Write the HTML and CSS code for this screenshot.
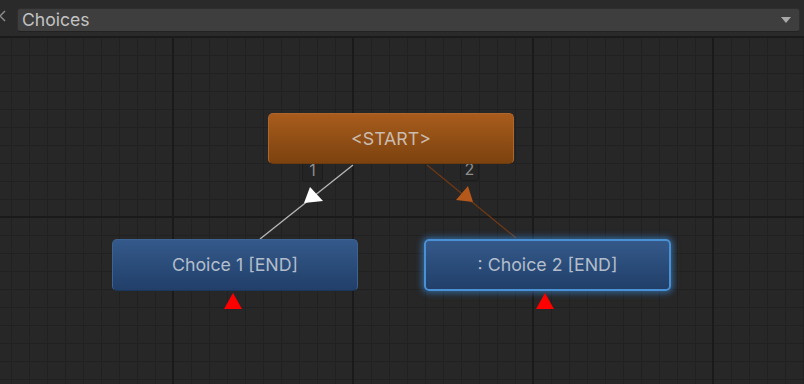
FILE: index.html
```html
<!DOCTYPE html>
<html lang="en">
<head>
	<meta charset="UTF-8">
	<title>Choices</title>
	<link rel="stylesheet" href="styles.css">
</head>
<body>
	<div class="toolbar">
		<svg class="back" width="12" height="37" viewBox="0 0 12 37">
			<polyline points="5,11 0,16 5,21" fill="none" stroke="#8a8a8a" stroke-width="1.5"/>
		</svg>
		<div class="dropdown">
			<span class="dropdown_text">Choices</span>
			<svg class="dropdown_arrow" width="10" height="6" viewBox="0 0 10 6">
				<polygon points="0,0 10,0 5,6" fill="#a9a9a9"/>
			</svg>
		</div>
	</div>

	<div class="graph">
		<svg class="edges" width="804" height="347" viewBox="0 0 804 347">
			<line x1="353" y1="128" x2="260" y2="202" stroke="#b5b5b5" stroke-width="1.4"/>
			<polygon points="310,150 323,164 304,166" fill="#ffffff"/>
			<line x1="427" y1="128" x2="516" y2="201" stroke="#6b3816" stroke-width="1.4"/>
			<polygon points="468,149 456,163 473,165" fill="#b4581c"/>
		</svg>

		<div class="label label_1">1</div>
		<div class="label label_2">2</div>

		<div class="node node_start">&lt;START&gt;</div>
		<div class="node node_end node_choice1">Choice 1 [END]</div>
		<div class="node node_end node_choice2 selected">: Choice 2 [END]</div>

		<div class="marker marker_1"></div>
		<div class="marker marker_2"></div>
	</div>
</body>
</html>
```

FILE: styles.css
```css
*{margin: 0; padding: 0;}
body{
	background: #282828;
	font-family: Inter, "Noto Sans", sans-serif;
	overflow: hidden;
}
.toolbar{
	height: 36px;
	border-bottom: 1px solid #1b1b1b;
	background: #2a2a2a;
	display: flex;
	align-items: flex-start;
}
.back{
	width: 12px;
	margin-right: 5px;
	flex: none;
}
.dropdown{
	flex: 1;
	height: 22px;
	margin: 8px 4px 0 0;
	padding: 0 8px 0 4px;
	background: #3e3e3e;
	border: 1px solid #2f2f2f;
	border-bottom-color: #222;
	border-radius: 3px;
	display: flex;
	align-items: center;
	justify-content: space-between;
}
.dropdown_text{
	font-size: 17.6px;
	color: #c3c3c3;
	line-height: 22px;
}
.graph{
	position: relative;
	height: 347px;
	overflow: hidden;
	background-color: #272727;
	background-image:
		linear-gradient(to right, #1a1a1a 2px, transparent 2px),
		linear-gradient(to bottom, #1a1a1a 2px, transparent 2px),
		linear-gradient(to right, #212121 1px, transparent 1px),
		linear-gradient(to bottom, #212121 1px, transparent 1px);
	background-size: 180px 100%, 100% 180px, 18px 100%, 100% 18px;
	background-position: 172px 0, 0 179px, 11px 0, 0 0;
}
.edges{
	position: absolute;
	top: 0;
	left: 0;
}
.label{
	position: absolute;
	background: #242424;
	border: 1px solid #1d1d1d;
	border-radius: 3px;
	color: #8d8d8d;
	font-size: 16px;
	line-height: 16px;
	display: flex;
	align-items: flex-end;
	justify-content: center;
	padding-bottom: 3px;
	box-sizing: border-box;
}
.label_1{
	left: 302px;
	top: 125px;
	width: 21px;
	height: 20px;
}
.label_2{
	left: 460px;
	top: 124px;
	width: 19px;
	height: 20px;
}
.node{
	position: absolute;
	width: 246px;
	height: 52px;
	border-radius: 5px;
	font-size: 17.8px;
	line-height: 49px;
	text-align: center;
	box-sizing: border-box;
}
.node_start{
	left: 268px;
	top: 76px;
	height: 51px;
	background: linear-gradient(#a85c1c, #7c420f);
	border: 1px solid #b0652a;
	border-bottom-color: #6d3a0d;
	color: #c9bcb0;
}
.node_end{
	top: 202px;
	background: linear-gradient(#34598a, #213f69);
	border: 1px solid #3d6394;
	border-bottom-color: #1c375c;
	color: #b3bdcb;
}
.node_choice1{
	left: 112px;
}
.node_choice2{
	left: 424px;
	width: 247px;
}
.selected{
	border: 2px solid #4a90d4;
	line-height: 47px;
	box-shadow: 0 0 6px 2px rgba(58, 140, 222, 0.6);
}
.marker{
	position: absolute;
	width: 0;
	height: 0;
	border-left: 9px solid transparent;
	border-right: 9px solid transparent;
	border-bottom: 16px solid #ff0000;
}
.marker_1{
	left: 224px;
	top: 256px;
}
.marker_2{
	left: 536px;
	top: 256px;
}
```
